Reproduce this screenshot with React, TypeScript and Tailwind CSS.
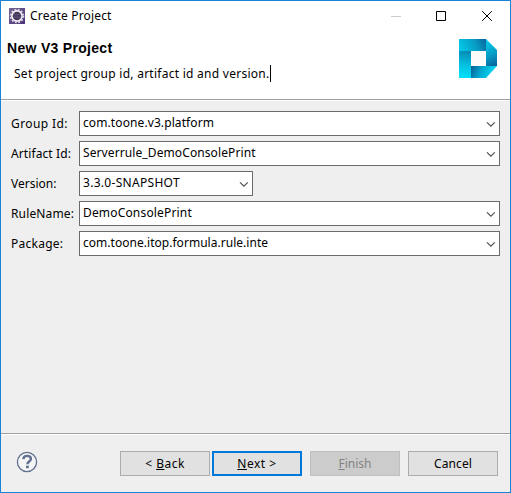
import React from "react";

type FieldProps = { label: string; value: string; narrow?: boolean; labelTracking?: string; tracking?: string };

function Chevron() {
  return (
    <svg width="10" height="7" viewBox="0 0 10 7" fill="none" className="mt-px shrink-0">
      <path d="M1 1.4 4.9 5.2 8.8 1.4" stroke="#555" strokeWidth="1.3" />
    </svg>
  );
}

function Field({ label, value, narrow, labelTracking = "", tracking = "" }: FieldProps) {
  return (
    <div className="flex h-[25px] items-center">
      <label className={`w-[68px] shrink-0 pt-px whitespace-nowrap ${labelTracking}`}>{label}</label>
      <div
        className={`flex h-[25px] items-center justify-between border border-[#6b6b6b] bg-white pr-[3px] pl-[3px] ${narrow ? "w-[174px]" : "w-[421px]"}`}
      >
        <span className={`pb-px whitespace-nowrap ${tracking}`}>{value}</span>
        <Chevron />
      </div>
    </div>
  );
}

function EclipseIcon() {
  return (
    <svg width="16" height="16" viewBox="0 0 16 16">
      <defs>
        <linearGradient id="ec" x1="0" y1="0" x2="1" y2="1">
          <stop offset="0" stopColor="#75658f" />
          <stop offset="1" stopColor="#4a3179" />
        </linearGradient>
      </defs>
      <rect width="16" height="16" fill="url(#ec)" />
      <circle cx="8" cy="8" r="6.5" fill="none" stroke="#d8d3e0" strokeWidth="1.6" strokeDasharray="1.9 1.5" />
      <circle cx="8" cy="8" r="5.1" fill="#443759" stroke="#f3f1f5" strokeWidth="1.6" />
      <path d="M4 6.6h8M4 9.2h8" stroke="#6f6289" strokeWidth="0.8" />
    </svg>
  );
}

function Logo() {
  return (
    <svg width="38" height="39" viewBox="0 0 38 39">
      <defs>
        <linearGradient id="lt" gradientUnits="userSpaceOnUse" x1="2" y1="12" x2="27" y2="0">
          <stop offset="0" stopColor="#03c8e8" />
          <stop offset="0.6" stopColor="#0799c2" />
          <stop offset="1" stopColor="#08639a" />
        </linearGradient>
        <linearGradient id="ll" gradientUnits="userSpaceOnUse" x1="9" y1="12" x2="4" y2="37">
          <stop offset="0" stopColor="#0788b3" />
          <stop offset="0.5" stopColor="#05bbdd" />
          <stop offset="1" stopColor="#02def8" />
        </linearGradient>
        <linearGradient id="lr" gradientUnits="userSpaceOnUse" x1="27" y1="4" x2="38" y2="27">
          <stop offset="0" stopColor="#06c5e6" />
          <stop offset="0.5" stopColor="#069dc6" />
          <stop offset="1" stopColor="#075f96" />
        </linearGradient>
        <linearGradient id="lb" gradientUnits="userSpaceOnUse" x1="12" y1="28" x2="32" y2="37">
          <stop offset="0" stopColor="#075f96" />
          <stop offset="0.5" stopColor="#05a9d0" />
          <stop offset="1" stopColor="#03d4f0" />
        </linearGradient>
      </defs>
      <path d="M0 0h27v12H0z" fill="url(#lt)" />
      <path d="M0 12h12v27H0z" fill="url(#ll)" />
      <path d="M27 0 38 11v16H27z" fill="url(#lr)" />
      <path d="M12 27h26L27 39H12z" fill="url(#lb)" />
      <path d="M12 12h14v15H12z" fill="#fbfbfb" />
    </svg>
  );
}

function HelpIcon() {
  return (
    <svg width="22" height="22" viewBox="0 0 22 22" fill="none">
      <circle cx="11" cy="11" r="9.6" fill="#f5f5f6" stroke="#61708f" strokeWidth="1.3" />
      <path d="M7.3 8.2c.2-2.3 1.6-3.3 3.8-3.3 2.3 0 3.8 1.1 3.8 3 0 2.6-3.5 2.7-3.5 5.3" stroke="#61708f" strokeWidth="2.4" />
      <path d="M10 14.7h2.8v2.5H10z" fill="#61708f" />
    </svg>
  );
}

const button = "flex h-[25px] w-[90px] items-center justify-center whitespace-pre border border-[#adadad] bg-[#e1e1e1]";

export default function App() {
  return (
    <div className="flex h-[493px] w-[511px] flex-col overflow-hidden border border-[#1883d7] bg-[#efefef] font-['Noto_Sans','Noto_Sans_CJK_SC',sans-serif] text-[12px] leading-[18px] text-black">
      <header className="h-[98px] shrink-0 bg-white">
        <div className="flex h-[30px] items-center pl-2">
          <EclipseIcon />
          <span className="ml-[5px] whitespace-nowrap tracking-[0.17px]">Create Project</span>
          <svg className="mr-[17px] ml-auto" width="102" height="10" viewBox="0 0 102 10" fill="none">
            <path d="M0 5.5h10" stroke="#ccc" />
            <path d="M45.500 .5h9v9h-9z" stroke="#000" />
            <path d="m91.500 .5 9 9m0-9-9 9" stroke="#000" strokeLinecap="square" />
          </svg>
        </div>
        <div className="flex justify-between pr-[13px] pl-[6px]">
          <div className="pt-2">
            <h1 className="font-['Liberation_Sans',Arial,sans-serif] text-[14px] font-bold tracking-[0.3px] whitespace-nowrap">New V3 Project</h1>
            <div className="mt-[8px] ml-[7px] flex h-[17px] items-center">
              <span className="tracking-[0.265px] whitespace-nowrap">Set project group id, artifact id and version.</span>
              <span className="h-[17px] w-px bg-black" />
            </div>
          </div>
          <div className="pt-2"><Logo /></div>
        </div>
      </header>
      <div className="h-[2px] shrink-0 border-t border-[#a0a0a0] bg-white" />
      <main className="flex flex-1 flex-col gap-[5px] pt-[10px] pl-[10px]">
        <Field label="Group Id:" value="com.toone.v3.platform" labelTracking="tracking-[0.4px]" tracking="tracking-[0.1px]" />
        <Field label="Artifact Id:" value="Serverrule_DemoConsolePrint" labelTracking="tracking-[0.1px]" tracking="tracking-[0.1px]" />
        <Field label="Version:" value="3.3.0-SNAPSHOT" narrow tracking="tracking-[0.3px]" />
        <Field label="RuleName:" value="DemoConsolePrint" labelTracking="tracking-[0.15px]" tracking="tracking-[0.17px]" />
        <Field label="Package:" value="com.toone.itop.formula.rule.inte" labelTracking="tracking-[0.25px]" tracking="tracking-[0.03px]" />
      </main>
      <div className="h-[2px] shrink-0 border-t border-[#a0a0a0] bg-white" />
      <footer className="flex h-[57px] shrink-0 items-start pt-4 pl-[15px]">
        <HelpIcon />
        <div className="ml-[82px] flex">
          <button className={`${button} tracking-[0.5px]`}>{"< "}<u>B</u>ack</button>
          <button className="ml-[2px] flex h-[25px] w-[90px] items-center justify-center border-2 border-[#0078d7] bg-[#e1e1e1] tracking-[0.5px] whitespace-pre"><u>N</u>{"ext >"}</button>
          <button className="ml-2 flex h-[25px] w-[90px] items-center justify-center border border-[#bfbfbf] bg-[#cccccc] text-[#838383]"><u>F</u>inish</button>
          <button className={`${button} ml-2 tracking-[0.1px]`}>Cancel</button>
        </div>
      </footer>
    </div>
  );
}
